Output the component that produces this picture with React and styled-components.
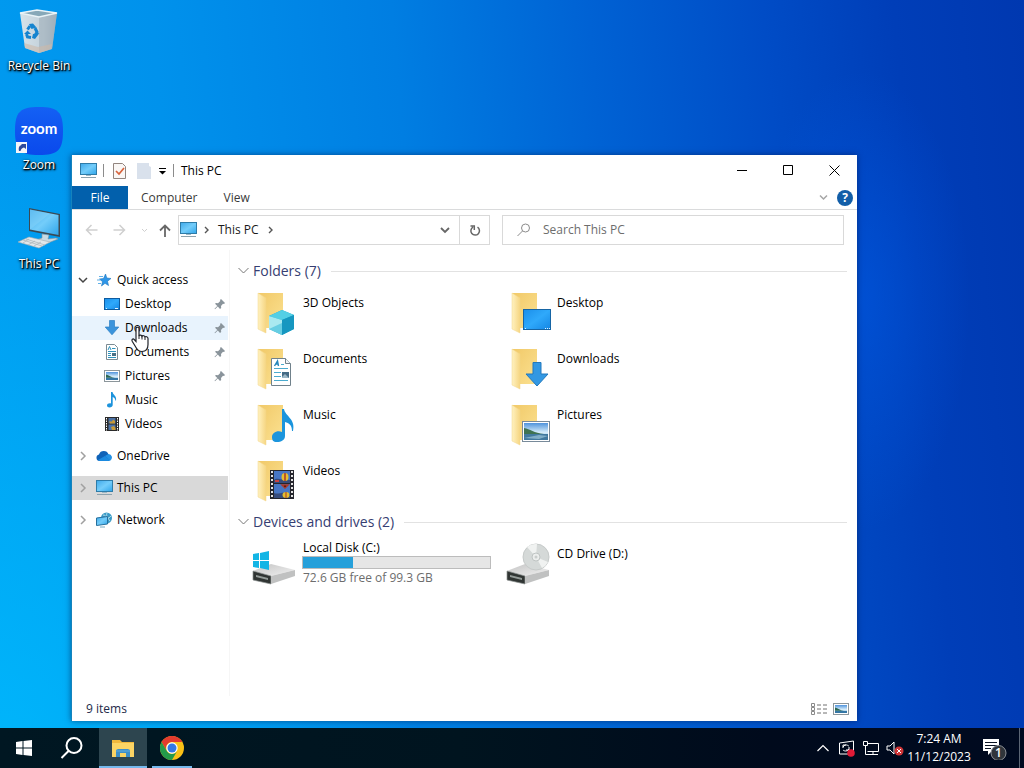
import React from "react";
import styled, { createGlobalStyle } from "styled-components";

const GlobalStyle = createGlobalStyle`
  *, *::before, *::after { box-sizing: border-box; }
  body { margin: 0; font-family: "Open Sans", "Noto Sans", sans-serif; font-size: 12px; line-height: 16px; color: #000; }
  button, input { font: inherit; color: inherit; }
  button { border: 0; background: none; padding: 0; }
  a { color: inherit; text-decoration: none; }
  ul { list-style: none; margin: 0; padding: 0; }
  svg { display: block; flex: none; }
`;

const Screen = styled.div`
  min-height: 100vh;
  display: flex;
  flex-direction: column;
  background:
    radial-gradient(ellipse 110px 230px at 860px 300px, rgba(0, 92, 232, 0.5), rgba(0, 80, 220, 0) 100%),
    radial-gradient(ellipse 420px 620px at 0 100%, rgba(0, 190, 255, 0.75), rgba(0, 176, 255, 0) 100%),
    linear-gradient(85deg, #009cf0 0%, #0092ec 20%, #007ee2 42%, #0062d4 60%, #004cc6 76%, #003eb8 88%, #0038b0 100%);
`;

const Desktop = styled.main`
  flex: 1;
  display: flex;
  padding-right: 167px;
`;

const Shortcuts = styled.nav`
  flex: none;
  width: 71px;
  padding: 8px 0 0 7px;
  display: flex;
  flex-direction: column;
  gap: 33px;
`;

const Shortcut = styled.a`
  display: flex;
  flex-direction: column;
  align-items: center;
  gap: 2px;
  color: #fff;
  white-space: nowrap;
  text-shadow: 1px 1px 1px #000, 1px 1px 2px #000, 0 1px 3px #000;
`;

const Window = styled.section`
  flex: 1;
  min-width: 0;
  margin: 155px 0 7px;
  display: flex;
  flex-direction: column;
  background: #fff;
  border-left: 1px solid #1583bd;
  box-shadow: 0 0 6px rgba(0, 20, 70, 0.55);
`;

const TitleBar = styled.header`
  height: 31px;
  display: flex;
  align-items: center;
  padding-left: 8px;
`;

const QuickTools = styled.div`
  display: flex;
  align-items: center;
  gap: 6px;
  margin-right: 7px;
`;

const Divider = styled.span`
  width: 1px;
  height: 13px;
  background: #8c8c8c;
`;

const Title = styled.h1`
  flex: 1;
  margin: 0;
  font-size: 12px;
  font-weight: 400;
`;

const CaptionButton = styled.button`
  width: 46px;
  height: 31px;
  display: grid;
  place-items: center;
`;

const Ribbon = styled.div`
  display: flex;
  height: 24px;
  padding-right: 4px;
  border-bottom: 1px solid #dadbdc;
`;

const Tab = styled.button`
  padding: 0 13px;
  min-width: ${(p) => (p.$primary ? "56px" : "0")};
  background: ${(p) => (p.$primary ? "#0260ac" : "transparent")};
  color: ${(p) => (p.$primary ? "#fff" : "#3a3a3a")};
`;

const RibbonEnd = styled.div`
  margin-left: auto;
  display: flex;
  align-items: center;
  gap: 8px;
`;

const IconButton = styled.button`
  display: grid;
  place-items: center;
  min-width: ${(p) => p.$width || 16}px;
`;

const AddressRow = styled.div`
  display: grid;
  grid-template-columns: auto minmax(0, 312fr) minmax(0, 354fr);
  padding: 5px 13px 5px 5px;
  height: 40px;
`;

const NavButtons = styled.div`
  display: flex;
  margin-right: 2px;
`;

const AddressBar = styled.div`
  display: flex;
  align-items: center;
  border: 1px solid #d9d9d9;
  padding-left: 1px;
  color: #1a1a1a;
`;

const Crumbs = styled.div`
  flex: 1;
  display: flex;
  align-items: center;
  gap: 7px;
  white-space: nowrap;
`;

const Crumb = styled.a`
  padding: 0 2px;
`;

const RefreshButton = styled.button`
  align-self: stretch;
  width: 30px;
  border-left: 1px solid #d9d9d9;
  display: grid;
  place-items: center;
`;

const SearchBox = styled.label`
  min-width: 0;
  margin-left: 12px;
  padding-left: 13px;
  display: flex;
  align-items: center;
  gap: 11px;
  border: 1px solid #d9d9d9;
`;

const SearchInput = styled.input`
  flex: 1;
  min-width: 0;
  border: 0;
  outline: 0;
  padding: 0;
  background: transparent;
  &::placeholder { color: #6d6d6d; opacity: 1; }
`;

const Body = styled.div`
  flex: 1;
  display: flex;
`;

const Sidebar = styled.nav`
  flex: none;
  width: 158px;
  padding: 18px 1px 0 0;
  border-right: 1px solid #f6f6f6;
  display: flex;
  flex-direction: column;
  gap: 8px;
`;

const TreeItem = styled.li`
  position: relative;
`;

const TreeRow = styled.a`
  height: 24px;
  display: flex;
  align-items: center;
  padding-left: ${(p) => (p.$child ? 32 : 2)}px;
  background: ${(p) => (p.$selected ? "#d9d9d9" : p.$hovered ? "#e8f3fd" : "transparent")};
`;

const TreeIcon = styled.span`
  width: 16px;
  height: 16px;
  margin-right: 5px;
`;

const Chevron = styled.span`
  width: 18px;
  margin-right: 4px;
  display: grid;
  place-items: center;
`;

const PinSlot = styled.span`
  margin-left: auto;
  margin-right: 2px;
`;

const Pointer = styled.svg`
  position: absolute;
  left: 58px;
  top: 10px;
  z-index: 1;
`;

const Content = styled.div`
  flex: 1;
  min-width: 0;
  padding: 9px 10px 0 8px;
`;

const GroupHeading = styled.h2`
  height: 24px;
  margin: 0;
  display: flex;
  align-items: center;
  gap: 10px;
  font-size: 14px;
  font-weight: 400;
  line-height: 24px;
  color: #363e72;
  white-space: nowrap;
  &::after { content: ""; flex: 1; height: 1px; background: #e2e2e2; }
`;

const GroupToggle = styled.button`
  display: flex;
  align-items: center;
  gap: 4px;
`;

const Tiles = styled.div`
  display: grid;
  grid-template-columns: repeat(auto-fill, 254px);
  grid-auto-rows: 56px;
  padding: 2px 0 1px 14px;
`;

const Tile = styled.a`
  display: flex;
  gap: 3px;
  padding-top: 4px;
`;

const TileText = styled.span`
  display: flex;
  flex-direction: column;
  padding-top: ${(p) => p.$top}px;
`;

const Capacity = styled.span`
  width: 189px;
  height: 13px;
  margin: 0 0 1px -1px;
  border: 1px solid #bcbcbc;
  background: #e6e6e6;
`;

const Used = styled.span`
  display: block;
  height: 100%;
  background: #26a0da;
`;

const Muted = styled.span`
  color: #6d6d6d;
`;

const StatusBar = styled.footer`
  height: 25px;
  display: flex;
  align-items: center;
  justify-content: space-between;
  padding: 0 8px 0 14px;
  color: #1e2b4a;
`;

const ViewModes = styled.div`
  display: flex;
  gap: 6px;
`;

const Taskbar = styled.footer`
  height: 40px;
  display: flex;
  color: #fff;
  background: linear-gradient(90deg, #001722, #00141f 45%, #000a1c 75%, #000a20);
`;

const TaskButton = styled.button`
  width: 48px;
  margin-left: ${(p) => (p.$active ? 3 : 0)}px;
  margin-right: ${(p) => (p.$active ? 1 : 0)}px;
  display: grid;
  place-items: center;
  background: ${(p) =>
    p.$active
      ? "linear-gradient(#76b9ed, #76b9ed) bottom / 48px 2px no-repeat, #2d454f"
      : p.$running
      ? "linear-gradient(#76b9ed, #76b9ed) bottom / 40px 2px no-repeat"
      : "none"};
`;

const Tray = styled.div`
  margin-left: auto;
  display: flex;
`;

const TrayButton = styled.button`
  width: ${(p) => p.$width || 24}px;
  display: grid;
  place-items: center;
`;

const Clock = styled.button`
  width: 64px;
  line-height: 18px;
  white-space: nowrap;
  text-align: center;
`;

const ShowDesktop = styled.button`
  width: 5px;
  border-left: 1px solid #5c6675;
`;

/* ---------- drawings ---------- */

const Gradients = () => (
  <svg width="0" height="0" style={{ position: "absolute" }} aria-hidden="true">
    <defs>
      <linearGradient id="screen" x1="0" y1="0" x2="1" y2="1">
        <stop offset="0" stopColor="#3fa9ea" /><stop offset=".5" stopColor="#74cdfa" /><stop offset="1" stopColor="#2fa5ea" />
      </linearGradient>
      <linearGradient id="blue" x1="0" y1="0" x2="1" y2="1">
        <stop offset="0" stopColor="#1b8fea" /><stop offset=".5" stopColor="#2fa9fb" /><stop offset="1" stopColor="#1486e4" />
      </linearGradient>
      <linearGradient id="flap" x1="0" y1="0" x2="1" y2="0">
        <stop offset="0" stopColor="#fff1c0" /><stop offset="1" stopColor="#f6d682" />
      </linearGradient>
      <linearGradient id="back" x1="0" y1="0" x2="1" y2="1">
        <stop offset="0" stopColor="#f1c968" /><stop offset="1" stopColor="#fbe191" />
      </linearGradient>
      <linearGradient id="drive" x1="0" y1="0" x2="1" y2="1">
        <stop offset="0" stopColor="#c4c4c4" /><stop offset="1" stopColor="#f1f1f1" />
      </linearGradient>
      <linearGradient id="sky" x1="0" y1="0" x2="0" y2="1">
        <stop offset="0" stopColor="#4f93dc" /><stop offset=".55" stopColor="#d5ecfa" /><stop offset="1" stopColor="#7fb2dd" />
      </linearGradient>
      <linearGradient id="bin" x1="0" y1="0" x2="1" y2="0">
        <stop offset="0" stopColor="#d6e3ea" /><stop offset=".65" stopColor="#c2d0d9" /><stop offset="1" stopColor="#98a9b6" />
      </linearGradient>
      <linearGradient id="zoomfill" x1="0" y1="0" x2="0" y2="1">
        <stop offset="0" stopColor="#1460f4" /><stop offset="1" stopColor="#0a49ec" />
      </linearGradient>
    </defs>
  </svg>
);

const Stroke = ({ d, w = 16, h = 16, color = "#000", width = 1, ...rest }) => (
  <svg width={w} height={h} viewBox={`0 0 ${w} ${h}`} fill="none" stroke={color} strokeWidth={width} aria-hidden="true" {...rest}>
    <path d={d} />
  </svg>
);

const PcIcon = () => (
  <svg width="17" height="16" viewBox="0 0 17 16">
    <rect x=".5" y=".5" width="16" height="11" fill="url(#screen)" stroke="#2f7ca8" />
    <path d="M6 12.500h5" stroke="#9bb8c6" />
    <path d="M1 14.500h15" stroke="#8da2ad" />
  </svg>
);

const RecycleBinIcon = () => (
  <svg width="48" height="48" viewBox="0 0 48 48">
    <path d="M5 5 22 2l20 3-5 36-13 4-14-5z" fill="url(#bin)" />
    <path d="M24 9 42 5l-5 36-13 4z" fill="#a3b2bd" opacity=".65" />
    <path d="M5 5 22 2l20 3-18 4z" fill="#87a8b8" stroke="#e9f3f7" strokeWidth="1.3" />
    <path d="m9 35 14 4 14-3-1 5-12 4-14-5z" fill="#cdb9a8" opacity=".6" />
    <g fill="none" stroke="#1584cf" strokeWidth="3">
      <path d="m12.500 21.500 2.500-3.500" /><path d="m20 20 2 4-1.500 3" /><path d="m16 29.500-3.500-.500-1-3" />
    </g>
    <path d="m14 16 4-.500 3.500 4-5 1.500zM24.500 25 20 31l-3-1 1-4zM9 26l3.500-3.500 3.500 3.500z" fill="#1584cf" />
  </svg>
);

const ZoomIcon = () => (
  <svg width="48" height="48" viewBox="0 0 48 48">
    <path d="M24 0c19 0 24 5 24 24s-5 24-24 24S0 43 0 24 5 0 24 0z" fill="url(#zoomfill)" />
    <text x="24" y="27" textAnchor="middle" fill="#fff" fontFamily="Lato, sans-serif" fontWeight="700" fontSize="15" style={{ textShadow: "none" }}>zoom</text>
    <rect x="1" y="35" width="11" height="11" fill="#f5f5f8" />
    <path d="M4 44c-1-4 1-6 3-6l-1-1h5v5l-2-1.500C7 41 6 42 5.500 44z" fill="#304a9b" />
  </svg>
);

const DesktopPcIcon = () => (
  <svg width="48" height="48" viewBox="0 0 48 48">
    <path d="m14 2 31 6v23l-31-6z" fill="#3a4a55" />
    <path d="m15 3.500 28.500 5.500v20L15 23.500z" fill="url(#screen)" />
    <path d="M15 3.500v20L35 7.500z" fill="#8fd8fb" opacity=".4" />
    <path d="m27 28 7 1-1 4 8-1 2 1-10 4-12-3 6-2z" fill="#c9dbe4" stroke="#8195a0" strokeWidth=".6" />
    <path d="m14 31 21 5-11 6L3 36z" fill="#e2e7ea" stroke="#a2abb0" strokeWidth=".6" />
    <path d="m11 33 19 6M8 34l19 6M14 33l-6 4M20 35l-7 4M26 36l-7 4" stroke="#aeb7bc" strokeWidth=".8" />
  </svg>
);

const StarIcon = () => (
  <svg width="16" height="16" viewBox="0 0 16 16">
    <path d="m9.500 2 1.300 4 4.200.5-3.500 2.700 1 4.300L9 11.300 5.500 14l1-4.300L3.500 7l4-.5z" fill="#2e96e8" stroke="#1974bd" strokeWidth=".6" />
    <path d="M3 4.500h4M1 8h3.500M2 11.500h3" stroke="#5fb0e8" />
  </svg>
);

const SmallDesktopIcon = () => (
  <svg width="16" height="16" viewBox="0 0 16 16">
    <rect x=".5" y="2.500" width="15" height="11" fill="url(#blue)" stroke="#0e5b9f" />
    <path d="M2 12.500h1m8 0h3" stroke="#e1f3ff" />
  </svg>
);

const SmallDownIcon = () => (
  <svg width="16" height="16" viewBox="0 0 16 16">
    <path d="M5.500.5h5V7h4.300L8 14.800 1.200 7h4.300z" fill="#3b94dc" stroke="#2d7fc4" strokeWidth=".7" />
  </svg>
);

const SmallDocIcon = () => (
  <svg width="16" height="16" viewBox="0 0 16 16">
    <path d="M2.500.5h8l3 3v12h-11z" fill="#fff" stroke="#7b8b93" />
    <path d="m4 6 1.500-3.500L7 6M8 4.500h3.500M4 7.500h8M4 9.500h3M4 11.500h3M4 13.500h8" fill="none" stroke="#2f93bd" />
    <path d="M8 9h4v3H8z" fill="#4a7085" />
  </svg>
);

const SmallPictureIcon = () => (
  <svg width="16" height="16" viewBox="0 0 16 16">
    <rect x=".5" y="2.500" width="15" height="11" fill="#fff" stroke="#8c969b" />
    <rect x="2" y="4" width="12" height="8" fill="url(#sky)" />
    <path d="M2 6.500c3 .5 5 3 9 3.200H2z" fill="#2c6753" /><path d="M2 10h12v2H2z" fill="#3476a5" />
  </svg>
);

const SmallMusicIcon = () => (
  <svg width="16" height="16" viewBox="0 0 16 16">
    <path d="M7 0h1.500c.5 3 4.500 4 3.500 8.500h-.7C11.500 6.500 10 5.500 8.700 5v8c0 1.500-1.500 2.500-3.200 2.500-1.500 0-2.500-.8-2.500-2 0-1.500 2-2.500 4-2z" fill="#1c93dc" />
  </svg>
);

const SmallVideoIcon = () => (
  <svg width="16" height="16" viewBox="0 0 16 16">
    <rect x="1" y="1" width="14" height="14" fill="#2a2a2a" />
    <path d="M2.500 2v13M13.500 2v13" stroke="#fff" strokeDasharray="1.500 1" />
    <path d="M4.500 2h7v5.500h-7zM4.500 8.500h7V14h-7z" fill="#4b72a8" />
    <path d="M5 5.500h3l1-2 2 1.500v2.500H6zM7 11l3-1 1.500 2v2H8z" fill="#c99a36" />
  </svg>
);

const OneDriveIcon = () => (
  <svg width="16" height="16" viewBox="0 0 16 16">
    <path d="M3 6.500a5 5 0 0 1 9.500 0A3.600 3.600 0 0 1 12.500 13H3.500A3.300 3.300 0 0 1 3 6.500z" fill="#0f62b8" />
    <path d="m9 8 3.500-2a3.500 3.500 0 0 1 1.700 6.500z" fill="#2391e4" /><path d="m2 12 7-4 5.500 4.400-2 .6h-9z" fill="#1b8ae0" />
  </svg>
);

const NetworkIcon = () => (
  <svg width="16" height="16" viewBox="0 0 16 16">
    <circle cx="10.500" cy="6" r="5.500" fill="#3a9ac6" /><path d="M7 3c3 0 3 2 4 3s3-1 4-2M11 1c-1 2 0 4 3 8" stroke="#b7e2ee" fill="none" />
    <path d="m.5 6 11-1.500V12L.5 13.500z" fill="url(#screen)" stroke="#276f9c" /><path d="M4 15h5" stroke="#7bacc4" />
  </svg>
);

const PinIcon = () => (
  <svg width="12" height="12" viewBox="0 0 12 12">
    <path d="m7 1 4 4-1 1-1-.3L7 8l.2 2L6 11 3.800 8.600 1 11.300l-.5-.5L3.300 8 1 5.800 2 5l2 .2L6.300 3 6 2z" fill="#8a949b" />
  </svg>
);

const overlays = {
  objects: (
    <g><path d="m17 27 13-6 12 5v14l-12 6-13-6z" fill="#19a5c9" /><path d="m17 27 13-6 12 5-12 5z" fill="#54cfe5" /><path d="M17 27l13 4v15l-13-6z" fill="#a9e9f0" /><path d="m30 31 12-5v14l-12 6z" fill="#1697c0" /><path d="m17 40 13-6v12z" fill="#25b3d5" opacity=".5" /></g>
  ),
  desktop: (
    <g><rect x="17.500" y="20.500" width="27" height="20" fill="url(#blue)" stroke="#1665a5" /><path d="M19 39.500h2m18 0h5" stroke="#e1f3ff" strokeDasharray="1 1" /></g>
  ),
  documents: (
    <g><path d="M19.500 13.500h14l5 5v22h-19z" fill="#fff" stroke="#70818b" /><path d="M33.500 13.500v5h5" fill="#eef4f7" stroke="#70818b" /><path d="m22.500 21 3-5 1 5m-3-2h3" fill="none" stroke="#2586bb" strokeWidth="1.400" /><path d="M29 19.500h3M22 23.500h14M22 27.500h7M22 31.500h7M22 35.500h14" stroke="#4aabcf" /><path d="M30 27h7v6h-7z" fill="#456b85" /><path d="M30 32l3-3 4 4h-7z" fill="#9bb7c6" /></g>
  ),
  downloads: <path d="M27 17.500h8V29h7L31 41 20 29h7z" fill="#3398e3" stroke="#2379bd" />,
  music: <path d="M30 8h2c1 7 12 10 9 22h-1c0-6-3-8-7-9v14c0 4-4 6-8 6s-5-2-5-5c0-4 5-7 10-5z" fill="#1b95dd" />,
  pictures: (
    <g><rect x="16.500" y="20.500" width="27" height="20" fill="#fff" stroke="#788a9a" /><rect x="18" y="22" width="24" height="17" fill="url(#sky)" /><path d="M18 27c6 1 10 5 20 6H18z" fill="#3f7352" /><path d="M18 33h24v6H18z" fill="#41799f" /><path d="m18 37 15-3 9 1-9 3z" fill="#9bc4d9" opacity=".7" /></g>
  ),
  videos: (
    <g transform="translate(0 -4)"><rect x="18" y="17" width="24" height="29" fill="#25262d" /><path d="M20 18v28M40 18v28" stroke="#e4e4e4" strokeWidth="2" strokeDasharray="2 2" /><path d="M22 18h16v12H22zM22 31h16v14H22z" fill="#4776c4" /><path d="M22 27c4-3 7 1 16 0v3H22zM22 40c5 2 8-2 16 1v4H22z" fill="#364b7b" /><ellipse cx="33" cy="24" rx="3.500" ry="4" fill="#e5be2e" /><path d="M33 20v8M30 32l3 3 3-3z" stroke="#aa3829" strokeWidth="1.500" /><ellipse cx="34" cy="42" rx="3.500" ry="3" fill="#e5be2e" /><path d="M34 39v6" stroke="#aa3829" /><path d="M23 28h4" stroke="#c74440" strokeWidth="2" /></g>
  ),
};

const FolderIcon = ({ kind }) => (
  <svg width="48" height="48" viewBox="0 0 48 48">
    <path d="M6 4h25v35H14z" fill="url(#back)" />
    <path d="m6 4 8 5v35l-8-4z" fill="url(#flap)" stroke="#f2d588" strokeWidth=".5" />
    {overlays[kind]}
  </svg>
);

const DriveIcon = ({ cd }) => (
  <svg width="48" height="48" viewBox="0 0 48 48">
    <path d="m1 31 18-7 24 6-24 6z" fill="url(#drive)" />
    <path d="m1 31 18 5v8L1 40z" fill="#303533" stroke="#8d9290" strokeWidth=".7" />
    <path d="m4 35 12 3v2L4 37z" fill="#939b98" />
    <path d="m19 36 24-6v6l-24 8z" fill="#c0c1c1" />
    {cd ? (
      <g><circle cx="30" cy="17" r="13" fill="#d5d9d8" stroke="#c6cac9" /><path d="M30 17 21 7a13 13 0 0 1 10-3zM30 17l12 5a13 13 0 0 1-6 6z" fill="#f0f2f1" /><circle cx="30" cy="17" r="4" fill="#eceeed" stroke="#bfc4c3" /><circle cx="30" cy="17" r="1.500" fill="#c9cdcc" /></g>
    ) : (
      <path d="m1 14 6-1v7H1zM8 13l9-2v9H8zM1 21h6v7l-6-1zM8 21h9v9l-9-2z" fill="#12b5e5" />
    )}
  </svg>
);

const ExplorerIcon = () => (
  <svg width="24" height="24" viewBox="0 0 24 24">
    <path d="M1 4h8l2 2h12v15H1z" fill="#f1b83c" /><path d="M1 7h22v14H1z" fill="#fbd464" />
    <path d="M5 21v-7l2-1h10l2 1v7h-4v-4H9v4z" fill="#3d8fc9" /><path d="M5 15h14" stroke="#65addb" />
  </svg>
);

const ChromeIcon = () => (
  <svg width="24" height="24" viewBox="0 0 24 24">
    <circle cx="12" cy="12" r="12" fill="#fbc116" />
    <path d="M1.600 6A12 12 0 0 1 22.400 6H12a6 6 0 0 0-5.200 9z" fill="#e33b2e" />
    <path d="M1.600 6A12 12 0 0 0 12 24l5.200-9a6 6 0 0 1-10.400 0z" fill="#249a4a" />
    <circle cx="12" cy="12" r="5.700" fill="#fff" /><circle cx="12" cy="12" r="4.500" fill="#3478e5" />
  </svg>
);

const SoundIcon = () => (
  <svg width="20" height="20" viewBox="0 0 20 20">
    <path d="M2 8h3l4-4v12l-4-4H2z" fill="none" stroke="#fff" /><circle cx="14" cy="13" r="4.500" fill="#cf3436" /><path d="m12 11 4 4m0-4-4 4" stroke="#fff" />
  </svg>
);

const NoticeIcon = () => (
  <svg width="24" height="24" viewBox="0 0 24 24">
    <path d="M0 3h16v12H9l-4 4v-4H0z" fill="#fff" /><path d="M2 6.500h12M2 9.500h12M2 12.500h6" stroke="#0b1424" />
    <circle cx="15.500" cy="17" r="7.500" fill="#30353b" stroke="#8c9096" /><text x="15.500" y="21" textAnchor="middle" fontSize="12" fontWeight="600" fill="#fff">1</text>
  </svg>
);

const quickAccess = [
  { name: "Desktop", icon: <SmallDesktopIcon />, pinned: true },
  { name: "Downloads", icon: <SmallDownIcon />, pinned: true, hovered: true },
  { name: "Documents", icon: <SmallDocIcon />, pinned: true },
  { name: "Pictures", icon: <SmallPictureIcon />, pinned: true },
  { name: "Music", icon: <SmallMusicIcon /> },
  { name: "Videos", icon: <SmallVideoIcon /> },
];

const roots = [
  { name: "OneDrive", icon: <OneDriveIcon /> },
  { name: "This PC", icon: <PcIcon />, selected: true },
  { name: "Network", icon: <NetworkIcon /> },
];

const folders = [
  ["3D Objects", "objects"], ["Desktop", "desktop"],
  ["Documents", "documents"], ["Downloads", "downloads"],
  ["Music", "music"], ["Pictures", "pictures"],
  ["Videos", "videos"],
];

const drive = { total: 99.3, free: 72.6 };

const HandPointer = () => (
  <Pointer width="20" height="27" viewBox="0 0 20 27" aria-hidden="true">
    <path d="M6 2.500C6 .8 9 .8 9 2.500V10c.3-1.200 2.700-1 3 .3.600-1 2.700-.6 3 .7.800-.8 3-.3 3 1.500v6c0 4-2 7-6 7-3.500 0-4.800-1.500-6-4L2.200 15.300c-1-1.800.8-3 2-1.800L6 15.500z" fill="#fff" stroke="#20242b" strokeWidth="1.200" />
    <path d="M9 9.500V13m3-3v3.500m3-2V14" stroke="#20242b" />
  </Pointer>
);

const Group = ({ title, children }) => (
  <section>
    <GroupHeading>
      <GroupToggle><Stroke w={11} h={8} d="m.5 1 5 5 5-5" color="#777" />{title}</GroupToggle>
    </GroupHeading>
    <Tiles>{children}</Tiles>
  </section>
);

export default function App() {
  return (
    <Screen>
      <GlobalStyle />
      <Gradients />
      <Desktop>
        <Shortcuts aria-label="Desktop">
          <Shortcut href="#bin"><RecycleBinIcon />Recycle Bin</Shortcut>
          <Shortcut href="#zoom"><ZoomIcon />Zoom</Shortcut>
          <Shortcut href="#pc"><DesktopPcIcon />This PC</Shortcut>
        </Shortcuts>
        <Window>
          <TitleBar>
            <QuickTools>
              <PcIcon />
              <Divider />
              <IconButton aria-label="Properties">
                <svg width="20" height="18" viewBox="0 0 20 18"><path d="M3.500 1.500h9l3 3v12h-12z" fill="#faf7f5" stroke="#92857f" /><path d="m6 9 3 3 5-6" fill="none" stroke="#d8633c" strokeWidth="1.700" /></svg>
              </IconButton>
              <IconButton aria-label="New folder">
                <svg width="14" height="16" viewBox="0 0 14 16"><path d="M0 0h12v3l2 1v12H0z" fill="#d9e1ec" /></svg>
              </IconButton>
              <IconButton $width={9} aria-label="Customize toolbar">
                <svg width="9" height="8" viewBox="0 0 9 8"><path d="M1 1.500h7" stroke="#000" /><path d="M1 4h7L4.500 7.500z" /></svg>
              </IconButton>
              <Divider />
            </QuickTools>
            <Title>This PC</Title>
            <CaptionButton aria-label="Minimize"><Stroke w={11} h={11} d="M0 5.500h10" /></CaptionButton>
            <CaptionButton aria-label="Maximize"><Stroke w={11} h={11} d="M.5.5h9v9h-9z" /></CaptionButton>
            <CaptionButton aria-label="Close"><Stroke w={11} h={11} d="m.5.5 10 10m0-10-10 10" /></CaptionButton>
          </TitleBar>
          <Ribbon>
            <Tab $primary>File</Tab>
            <Tab>Computer</Tab>
            <Tab>View</Tab>
            <RibbonEnd>
              <IconButton $width={12} aria-label="Expand ribbon"><Stroke w={9} h={7} d="m1 1.500 3.500 3.500L8 1.500" color="#a6a6a6" width={1.5} /></IconButton>
              <IconButton aria-label="Help">
                <svg width="16" height="16" viewBox="0 0 16 16"><circle cx="8" cy="8" r="8" fill="#125ea8" /><text x="8" y="12" textAnchor="middle" fontSize="12" fontWeight="700" fill="#fff">?</text></svg>
              </IconButton>
            </RibbonEnd>
          </Ribbon>
          <AddressRow>
            <NavButtons>
              <IconButton $width={28} aria-label="Back"><Stroke w={13} h={12} d="M12.500 6h-11m5-5-5 5 5 5" color="#cfcfcf" width={1.5} /></IconButton>
              <IconButton $width={29} aria-label="Forward"><Stroke w={13} h={12} d="M.5 6h11m-5-5 5 5-5 5" color="#cfcfcf" width={1.5} /></IconButton>
              <IconButton $width={20} aria-label="Recent locations"><Stroke w={7} h={5} d="m1 1 2.500 2.500L6 1" color="#cfcfcf" /></IconButton>
              <IconButton $width={22} aria-label="Up"><Stroke w={12} h={13} d="M6 13V1.500m-5 5 5-5 5 5" color="#686868" width={1.800} /></IconButton>
            </NavButtons>
            <AddressBar>
              <Crumbs>
                <PcIcon />
                <Stroke w={5} h={8} d="m1 1 3 3-3 3" color="#555" width={1.400} />
                <Crumb href="#pc">This PC</Crumb>
                <Stroke w={5} h={8} d="m1 1 3 3-3 3" color="#555" width={1.400} />
              </Crumbs>
              <IconButton $width={28} aria-label="Previous locations"><Stroke w={10} h={7} d="m1 1 4 4 4-4" color="#666" width={1.800} /></IconButton>
              <RefreshButton aria-label="Refresh"><Stroke w={12} h={13} d="M8.500 3.200A4.300 4.300 0 1 1 4 3.100M1.500 2h3.800v4" color="#666" width={1.500} /></RefreshButton>
            </AddressBar>
            <SearchBox>
              <Stroke w={16} h={16} d="M13.500 6a4 4 0 1 1-8 0 4 4 0 0 1 8 0ZM6.500 9 1.500 14" color="#8b8b8b" />
              <SearchInput type="search" placeholder="Search This PC" aria-label="Search This PC" />
            </SearchBox>
          </AddressRow>
          <Body>
            <Sidebar aria-label="Folders">
              <ul>
                <TreeItem>
                  <TreeRow href="#quick">
                    <Chevron><Stroke w={10} h={7} d="m1 1 4 4 4-4" color="#444" width={1.500} /></Chevron>
                    <TreeIcon><StarIcon /></TreeIcon>Quick access
                  </TreeRow>
                </TreeItem>
                {quickAccess.map((item) => (
                  <TreeItem key={item.name}>
                    <TreeRow href={`#${item.name}`} $child $hovered={item.hovered}>
                      <TreeIcon>{item.icon}</TreeIcon>{item.name}
                      {item.pinned && <PinSlot><PinIcon /></PinSlot>}
                    </TreeRow>
                    {item.hovered && <HandPointer />}
                  </TreeItem>
                ))}
              </ul>
              {roots.map((item) => (
                <ul key={item.name}>
                  <TreeItem>
                    <TreeRow href={`#${item.name}`} $selected={item.selected}>
                      <Chevron><Stroke w={7} h={10} d="m1 1 4 4-4 4" color="#a0a0a0" width={1.500} /></Chevron>
                      <TreeIcon>{item.icon}</TreeIcon>{item.name}
                    </TreeRow>
                  </TreeItem>
                </ul>
              ))}
            </Sidebar>
            <Content>
              <Group title="Folders (7)">
                {folders.map(([name, kind]) => (
                  <Tile key={name} href={`#${kind}`}>
                    <FolderIcon kind={kind} /><TileText $top={6}>{name}</TileText>
                  </Tile>
                ))}
              </Group>
              <Group title="Devices and drives (2)">
                <Tile href="#c">
                  <DriveIcon />
                  <TileText $top={0}>
                    <span>Local Disk (C:)</span>
                    <Capacity role="progressbar" aria-label="Used space" aria-valuenow={27}>
                      <Used style={{ width: `${((drive.total - drive.free) / drive.total) * 100}%` }} />
                    </Capacity>
                    <Muted>{drive.free} GB free of {drive.total} GB</Muted>
                  </TileText>
                </Tile>
                <Tile href="#d"><DriveIcon cd /><TileText $top={6}>CD Drive (D:)</TileText></Tile>
              </Group>
            </Content>
          </Body>
          <StatusBar>
            <span>9 items</span>
            <ViewModes>
              <IconButton aria-label="Details view">
                <svg width="16" height="12" viewBox="0 0 16 12"><path d="M.5.500h3v3h-3zM.5 4.500h3v3h-3zM.5 8.500h3v3h-3z" fill="none" stroke="#8a8a8a" /><path d="M6 2h4m2 0h4M6 6h4m2 0h4M6 10h4m2 0h4" stroke="#707070" /></svg>
              </IconButton>
              <IconButton aria-label="Large icons view"><SmallPictureIcon /></IconButton>
            </ViewModes>
          </StatusBar>
        </Window>
      </Desktop>
      <Taskbar>
        <TaskButton aria-label="Start">
          <svg width="16" height="16" viewBox="0 0 16 16"><path d="m0 2 6.500-1v6.500H0zM7.500 1 16 0v7.500H7.500zM0 8.500h6.500V15L0 14zM7.500 8.500H16V16l-8.500-1z" fill="#fff" /></svg>
        </TaskButton>
        <TaskButton aria-label="Search"><Stroke w={24} h={24} d="M21.500 9.500a7.500 7.500 0 1 1-15 0 7.500 7.500 0 0 1 15 0ZM8.500 15 1.500 22" color="#fff" width={2} /></TaskButton>
        <TaskButton $active aria-label="File Explorer"><ExplorerIcon /></TaskButton>
        <TaskButton $running aria-label="Google Chrome"><ChromeIcon /></TaskButton>
        <Tray>
          <TrayButton aria-label="Show hidden icons"><Stroke w={12} h={8} d="m.5 7 5.500-5.500L11.500 7" color="#fff" width={1.200} /></TrayButton>
          <TrayButton aria-label="Updates">
            <svg width="18" height="18" viewBox="0 0 18 18"><path d="m1.500 4 14-2v13h-14z" fill="none" stroke="#fff" /><path d="M5 9V6h3m-3 2c3-4 5-1 6-1M11 8v3H8m3-1c-2 3-5 2-6 1" fill="none" stroke="#fff" /><circle cx="13" cy="14" r="3.800" fill="#e11b37" /></svg>
          </TrayButton>
          <TrayButton aria-label="Network"><Stroke w={18} h={16} d="M5.500 3.500h11v8h-11M11 11.500v3M6 14.500h10M1.500 1.500h4v4h-4zM3.500 5.500v9H7" color="#fff" /></TrayButton>
          <TrayButton aria-label="Volume muted"><SoundIcon /></TrayButton>
          <Clock>7:24 AM<br />11/12/2023</Clock>
          <TrayButton $width={48} aria-label="Notifications"><NoticeIcon /></TrayButton>
          <ShowDesktop aria-label="Show desktop" />
        </Tray>
      </Taskbar>
    </Screen>
  );
}
